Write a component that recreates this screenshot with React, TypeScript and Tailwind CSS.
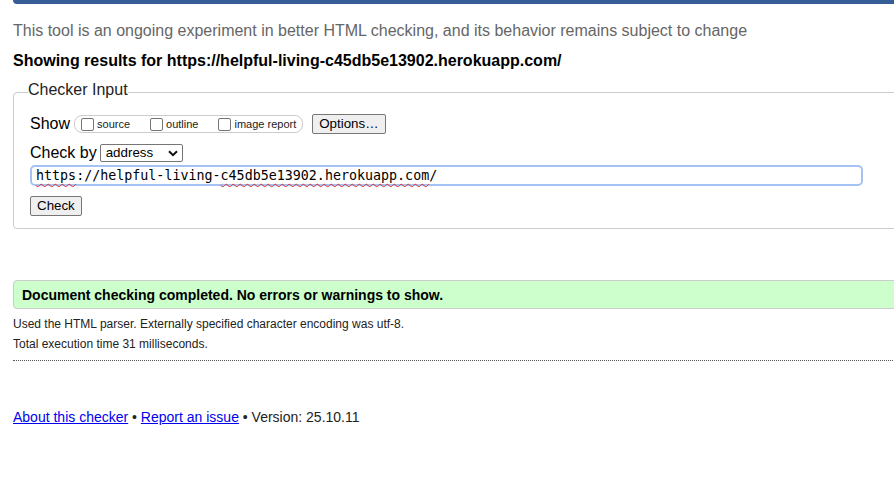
import React from "react";

const url = "https://helpful-living-c45db5e13902.herokuapp.com/";

function Box({ label }: { label: string }) {
  return (
    <span className="flex items-center">
      <span className="block w-[13px] h-[13px] rounded-[2px] border border-[#767676] bg-white" />
      <span className="ml-[3px] text-[11px] leading-[13px] text-[#222]">{label}</span>
    </span>
  );
}

function Chevron() {
  return (
    <svg width="10" height="7" viewBox="0 0 10 7" className="ml-auto mr-[4px]">
      <path d="M1 1.2 L5 5.2 L9 1.2" fill="none" stroke="#111" strokeWidth="2" />
    </svg>
  );
}

export default function App() {
  return (
    <div className="w-[894px] h-[496px] overflow-hidden bg-white text-[#000] font-['Liberation_Sans',Arial,sans-serif]">
      <div className="w-[1000px] pl-[13px]">
        <div className="h-[4px] w-[950px] bg-[#365d95] rounded-bl-[4px]" />

        <p className="mt-[18px] text-[16px] leading-[18px] text-[#666]">
          This tool is an ongoing experiment in better HTML checking, and its behavior remains subject to change
        </p>
        <p className="mt-[12px] text-[16px] leading-[18px] font-bold text-[#000]">
          Showing results for {url}
        </p>

        <fieldset className="mt-[11px] w-[950px] border border-[#ccc] rounded-[4px] pl-[14px] pr-[14px] pb-[12px]">
          <legend className="px-0 pb-[5px] text-[16px] leading-[18px] text-[#222]">Checker Input</legend>

          <div className="mt-[10px] ml-[2px] flex items-center h-[20px]">
            <span className="text-[16px] leading-[18px]">Show</span>
            <span className="ml-[4px] flex items-center h-[18px] rounded-[8px] border border-[#ccc] pl-[6px] pr-[6px]">
              <Box label="source" />
              <span className="w-[20px]" />
              <Box label="outline" />
              <span className="w-[20px]" />
              <Box label="image report" />
            </span>
            <button className="ml-[9px] h-[20px] px-[6px] border border-[#767676] rounded-[2px] bg-[#efefef] text-[13.33px] leading-[16px] text-[#000]">
              Options…
            </button>
          </div>

          <div className="mt-[9px] ml-[2px] flex items-center h-[20px]">
            <span className="text-[16px] leading-[18px]">Check by</span>
            <span className="ml-[3px] flex items-center w-[83px] h-[18px] border border-[#767676] rounded-[2px] pl-[5px] text-[13.33px] leading-[16px]">
              address
              <Chevron />
            </span>
          </div>

          <div className="mt-[2px] ml-[2px] w-[833px] h-[21px] flex items-center border-2 border-[#a4c2f4] rounded-[5px] pl-[4px] font-['DejaVu_Sans_Mono',monospace] text-[13.33px] leading-[16px] text-[#000]">
            <span className="underline decoration-wavy decoration-[#e03030] decoration-1 underline-offset-[3px]">https</span>
            ://helpful-living-
            <span className="underline decoration-wavy decoration-[#e03030] decoration-1 underline-offset-[3px]">c45db5e13902.herokuapp.com</span>
            /
          </div>

          <div className="mt-[10px] ml-[2px] flex">
            <button className="h-[20px] px-[6px] border border-[#767676] rounded-[2px] bg-[#efefef] text-[13.33px] leading-[16px] text-[#000]">
              Check
            </button>
          </div>
        </fieldset>

        <div className="mt-[51px] w-[950px] h-[29px] flex items-center border border-[#ccc] rounded-l-[4px] bg-[#ccffcc] pl-[8px]">
          <span className="text-[14px] leading-[16px] font-bold text-[#000]">
            Document checking completed. No errors or warnings to show.
          </span>
        </div>

        <p className="mt-[5px] text-[12px] leading-[20px] text-[#222]">
          Used the HTML parser. Externally specified character encoding was utf-8.
        </p>
        <p className="text-[12px] leading-[20px] text-[#222]">Total execution time 31 milliseconds.</p>

        <div className="mt-[6px] w-[950px] border-t border-dotted border-[#555]" />

        <p className="mt-[48px] text-[14px] leading-[16px] text-[#222]">
          <a href="#" className="text-[#0000ee] underline">About this checker</a>
          {" • "}
          <a href="#" className="text-[#0000ee] underline">Report an issue</a>
          {" • Version: 25.10.11"}
        </p>
      </div>
    </div>
  );
}
